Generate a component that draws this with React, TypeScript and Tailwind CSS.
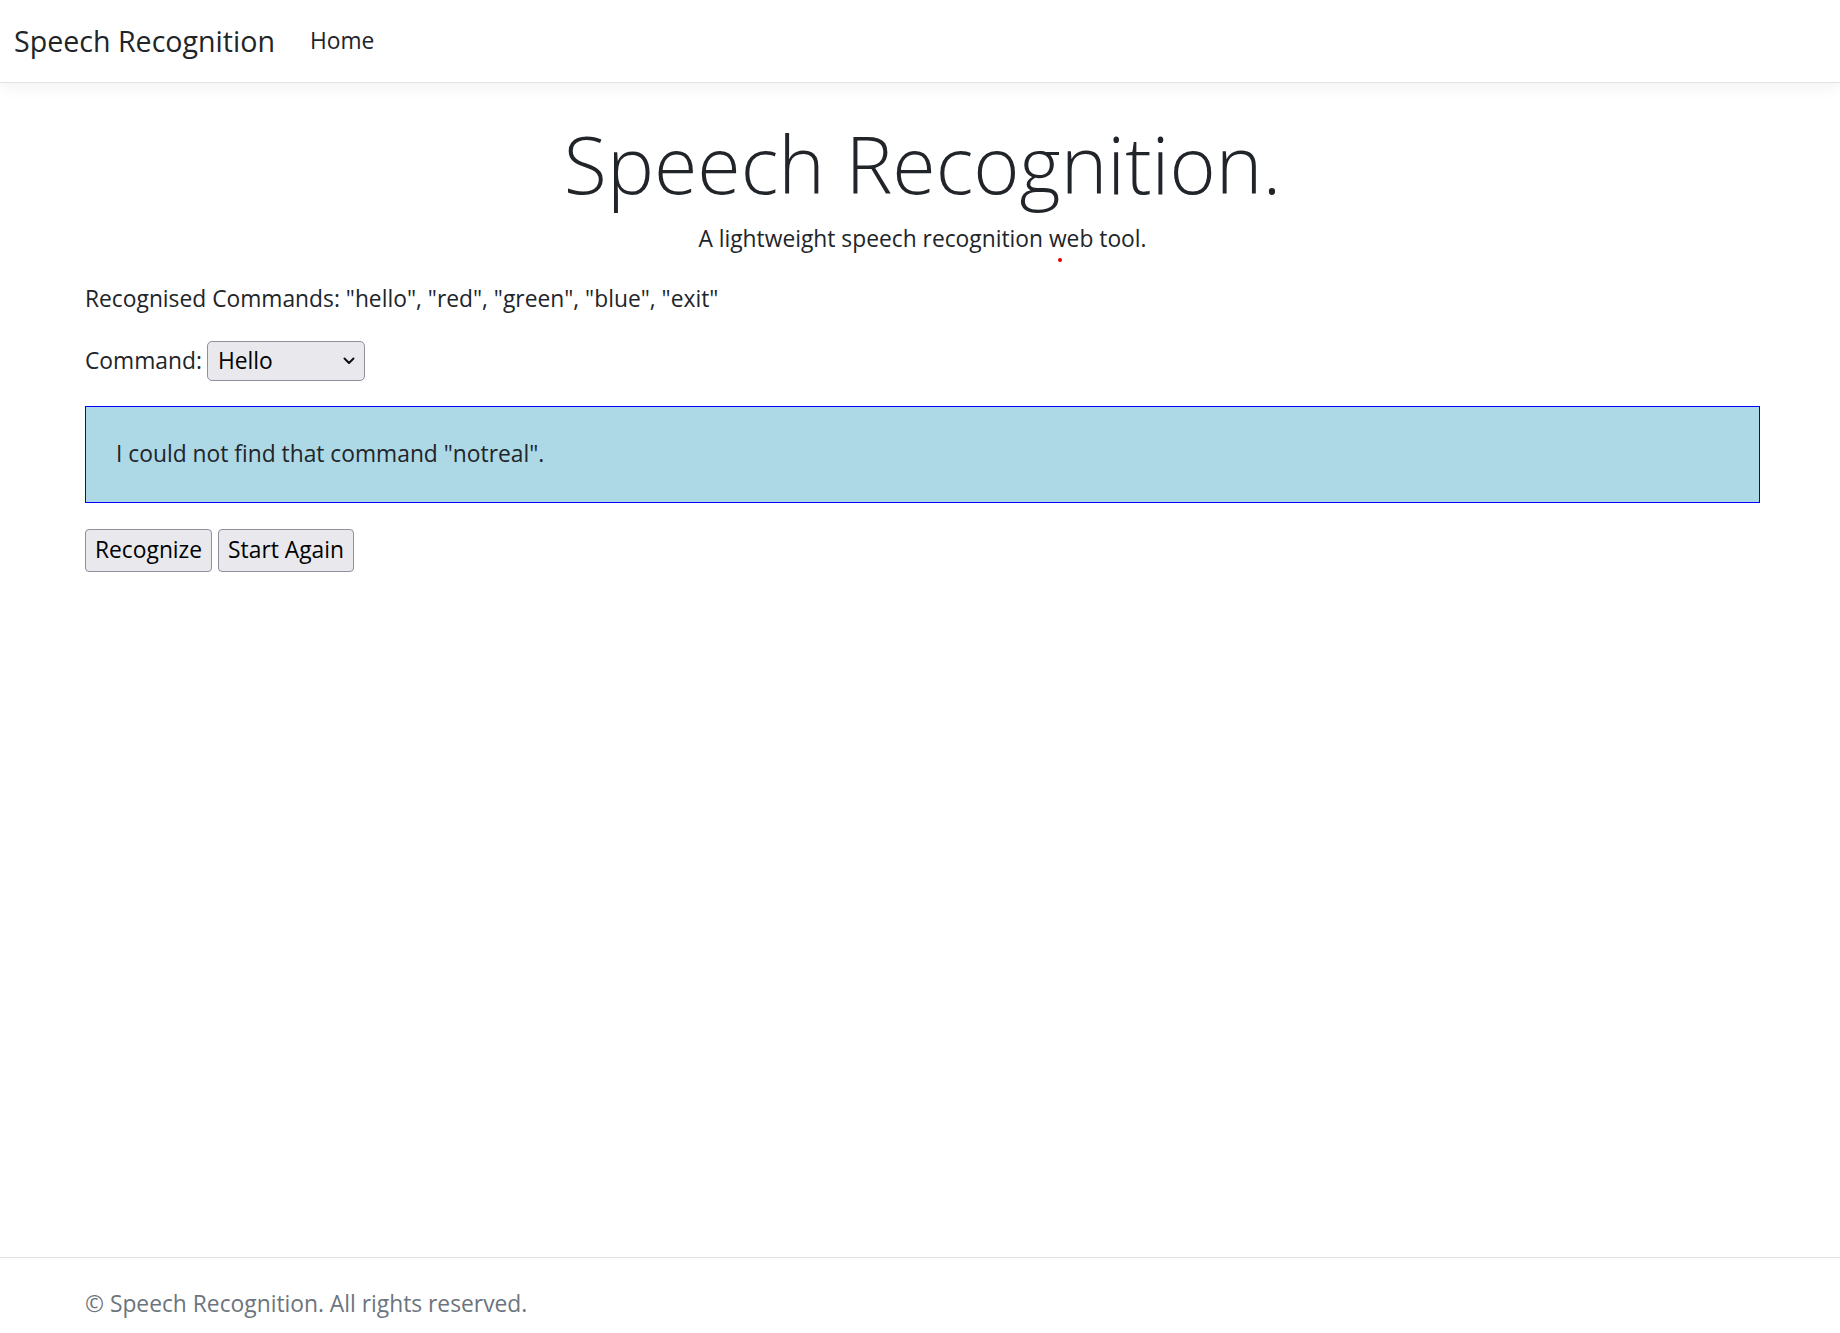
const font = { fontFamily: '"Open Sans", "Noto Sans", sans-serif' };

function Chevron() {
  return (
    <svg width="12" height="8" viewBox="0 0 12 8" fill="none" stroke="#111" strokeWidth="2" strokeLinecap="round" strokeLinejoin="round">
      <path d="M1.5 1.5L6 6l4.5-4.5" />
    </svg>
  );
}

export default function App() {
  return (
    <div style={font} className="relative flex min-h-screen flex-col bg-white text-[#212529]">
      <header className="flex h-[83px] items-center border-b border-[#dee2e6] bg-white pl-[14px] shadow-[0_5px_15px_rgba(0,0,0,0.05)]">
        <span className="text-[28.6px] leading-none">Speech Recognition</span>
        <a className="ml-[35px] text-[22.8px] leading-none">Home</a>
      </header>

      <main className="ml-[85px] w-[1675px] pt-[34px] text-[22.8px]">
        <div className="text-center">
          <h1 className="text-[79px] font-light leading-[1.2]">Speech Recognition.</h1>
          <p className="mt-[10px] leading-[34px]">A lightweight speech recognition web tool.</p>
        </div>

        <p className="mt-[26px] leading-[34px]">
          Recognised Commands: "hello", "red", "green", "blue", "exit"
        </p>

        <div className="mt-[25px] flex items-center">
          <span>Command:</span>
          <div className="ml-[5px] flex h-[40px] w-[158px] items-center justify-between rounded-[5px] border border-[#8f8f9d] bg-[#e9e9ed] pl-[10px] pr-[9px] text-black">
            <span>Hello</span>
            <Chevron />
          </div>
        </div>

        <div className="mt-[25px] flex h-[97px] items-center border border-[#0000ff] bg-[#add8e6] pl-[30px]">
          I could not find that command "notreal".
        </div>

        <div className="mt-[26px] flex gap-[6px]">
          <button className="h-[43px] rounded-[4px] border border-[#8f8f9d] bg-[#e9e9ed] px-[9px] text-black">
            Recognize
          </button>
          <button className="h-[43px] rounded-[4px] border border-[#8f8f9d] bg-[#e9e9ed] px-[9px] text-black">
            Start Again
          </button>
        </div>
      </main>

      <footer className="mt-auto h-[76px] border-t border-[#dee2e6]">
        <div className="ml-[85px] pt-[29px] text-[22.8px] leading-[34px] text-[#6c757d]">
          © Speech Recognition. All rights reserved.
        </div>
      </footer>

      <span className="absolute left-[1058px] top-[258px] h-[4px] w-[4px] rounded-full bg-[#e00000]" />
    </div>
  );
}
